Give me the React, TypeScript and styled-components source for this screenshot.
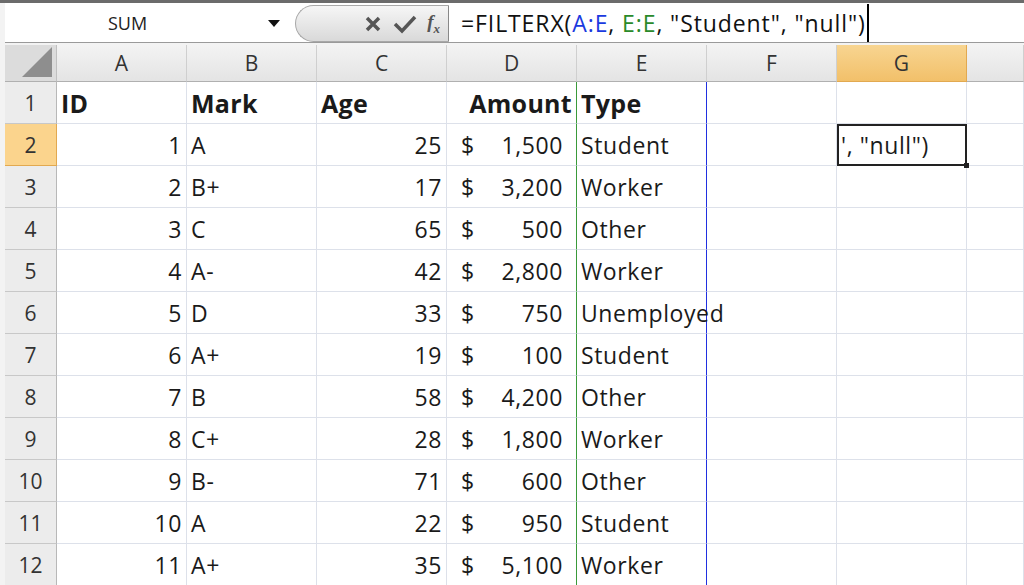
import React from "react";
import styled, { createGlobalStyle } from "styled-components";

const Global = createGlobalStyle`
  html, body { margin: 0; padding: 0; background: #f1f1f1; overflow: hidden; }
  * { box-sizing: border-box; }
`;

const Page = styled.div`
  width: 1024px; height: 585px; overflow: hidden;
  font-family: "Open Sans", "Noto Sans", sans-serif;
  border-top: 3px solid #6b6b6b;
  padding-left: 5px;
  background: #f3f3f3;
`;

const Bar = styled.div`
  display: flex; height: 40px; background: #fff;
  border-bottom: 1px solid #9a9a9a;
  margin-bottom: 2px;
`;
const NameBox = styled.div`
  width: 285px; display: flex; align-items: center; position: relative;
  font-size: 18px; color: #222; justify-content: center; padding-right: 40px;
`;
const Arrow = styled.div`
  position: absolute; right: 10px; top: 17px;
  border-left: 6px solid transparent; border-right: 6px solid transparent; border-top: 7px solid #111;
`;
const Buttons = styled.div`
  width: 154px; margin: 2px 0 0 5px; height: 37px;
  border-radius: 22px 0 0 22px;
  background: linear-gradient(#f6f6f6, #d9d9d9);
  border: 1px solid #a8a8a8; border-right: 1px solid #888;
  display: flex; align-items: center; justify-content: flex-end; gap: 10px; padding-right: 8px;
  color: #444;
`;
const Fx = styled.span`
  font-family: "Liberation Serif", serif; font-style: italic; font-weight: bold; font-size: 19px; color: #555;
`;
const Formula = styled.div`
  flex: 1; display: flex; align-items: center; padding-left: 12px;
  font-size: 23px; letter-spacing: 0.9px; color: #111; white-space: pre;
`;
const Ref = styled.span<{ $c: string }>` color: ${p => p.$c}; `;
const Caret = styled.span` display: inline-block; width: 2px; height: 38px; background: #000; margin-left: 1px; `;

const Grid = styled.div`
  display: grid;
  grid-template-columns: 52px repeat(7, 130px) 1fr;
  grid-template-rows: 37px;
  grid-auto-rows: 42px;
  background: #fff;
  position: relative;
`;
const Corner = styled.div`
  background: #dcdcdc; border-right: 1px solid #c0c0c0; border-bottom: 1px solid #b0b0b0;
  position: relative;
  &::after { content: ""; position: absolute; right: 4px; bottom: 4px; width: 0; height: 0;
    border-left: 30px solid transparent; border-bottom: 30px solid #8e8e8e; }
`;
const ColHead = styled.div<{ $sel?: boolean }>`
  display: flex; align-items: center; justify-content: center;
  font-size: 21px; color: #333;
  background: ${p => (p.$sel ? "linear-gradient(#f8d591,#f2c06a)" : "linear-gradient(#f3f3f3,#e4e4e4)")};
  border-right: 1px solid ${p => (p.$sel ? "#e2a950" : "#cfcfcf")};
  border-bottom: 1px solid ${p => (p.$sel ? "#e2a950" : "#b0b0b0")};
`;
const RowHead = styled.div<{ $sel?: boolean }>`
  display: flex; align-items: center; justify-content: center; font-size: 21px; color: #333;
  background: ${p => (p.$sel ? "#fbd48d" : "#ececec")};
  border-right: 1px solid ${p => (p.$sel ? "#e2a950" : "#b8b8b8")};
  border-bottom: 1px solid ${p => (p.$sel ? "#e2a950" : "#c8c8c8")};
`;
const Cell = styled.div<{ $align?: string; $bold?: boolean; $sel?: boolean; $rb?: string }>`
  display: flex; align-items: center; padding: 0 4px; white-space: nowrap; overflow: visible;
  justify-content: ${p => p.$align || "flex-start"};
  font-size: ${p => (p.$bold ? 25 : 23)}px; font-weight: ${p => (p.$bold ? 700 : 400)};
  letter-spacing: ${p => (p.$bold ? 0.3 : 0.6)}px;
  color: #1a1a1a;
  border-right: 1px solid ${p => p.$rb || "#dde1ea"};
  border-bottom: 1px solid #dde1ea;
  ${p => p.$sel && "outline: 2px solid #222; outline-offset: -2px; z-index: 1;"}
  ${p => p.$sel && "&::after{content:'';position:absolute;right:-3px;bottom:-3px;width:5px;height:5px;background:#222;}"}
  position: ${p => (p.$sel ? "relative" : "static")};
`;
const Money = styled.div`
  display: flex; width: 100%; justify-content: space-between; padding: 0 9px 0 10px;
`;

const data: [number, string, number, string, string][] = [
  [1, "A", 25, "1,500", "Student"],
  [2, "B+", 17, "3,200", "Worker"],
  [3, "C", 65, "500", "Other"],
  [4, "A-", 42, "2,800", "Worker"],
  [5, "D", 33, "750", "Unemployed"],
  [6, "A+", 19, "100", "Student"],
  [7, "B", 58, "4,200", "Other"],
  [8, "C+", 28, "1,800", "Worker"],
  [9, "B-", 71, "600", "Other"],
  [10, "A", 22, "950", "Student"],
  [11, "A+", 35, "5,100", "Worker"],
];

const GREEN = "#3a9a3a";
const BLUE = "#2030e0";

export default function App() {
  const cols = ["A", "B", "C", "D", "E", "F", "G", ""];
  return (
    <Page>
      <Global />
      <Bar>
        <NameBox>SUM<Arrow /></NameBox>
        <Buttons>
          <svg width="20" height="20" viewBox="0 0 20 20"><path d="M4 4L16 16M16 4L4 16" stroke="#555" strokeWidth="3.5" /></svg>
          <svg width="24" height="20" viewBox="0 0 24 20"><path d="M2 10L9 17L22 3" stroke="#555" strokeWidth="3.5" fill="none" /></svg>
          <Fx>f<sub style={{ fontSize: 13 }}>x</sub></Fx>
        </Buttons>
        <Formula>
          =FILTERX(<Ref $c="#1a3adf">A:E</Ref>, <Ref $c="#2a8a2a">E:E</Ref>, "Student", "null")<Caret />
        </Formula>
      </Bar>
      <Grid>
        <Corner />
        {cols.map((c, i) => <ColHead key={i} $sel={c === "G"}>{c}</ColHead>)}
        <RowHead>1</RowHead>
        <Cell $bold>ID</Cell>
        <Cell $bold>Mark</Cell>
        <Cell $bold>Age</Cell>
        <Cell $bold $align="flex-end" $rb={GREEN}>Amount</Cell>
        <Cell $bold $rb={BLUE}>Type</Cell>
        <Cell /><Cell /><Cell />
        {data.map((r, i) => (
          <React.Fragment key={i}>
            <RowHead $sel={i === 0}>{i + 2}</RowHead>
            <Cell $align="flex-end">{r[0]}</Cell>
            <Cell>{r[1]}</Cell>
            <Cell $align="flex-end">{r[2]}</Cell>
            <Cell $rb={GREEN}><Money><span>$</span><span>{r[3]}</span></Money></Cell>
            <Cell $rb={BLUE}>{r[4]}</Cell>
            <Cell />
            <Cell $sel={i === 0}>{i === 0 ? `', "null")` : ""}</Cell>
            <Cell />
          </React.Fragment>
        ))}
      </Grid>
    </Page>
  );
}
